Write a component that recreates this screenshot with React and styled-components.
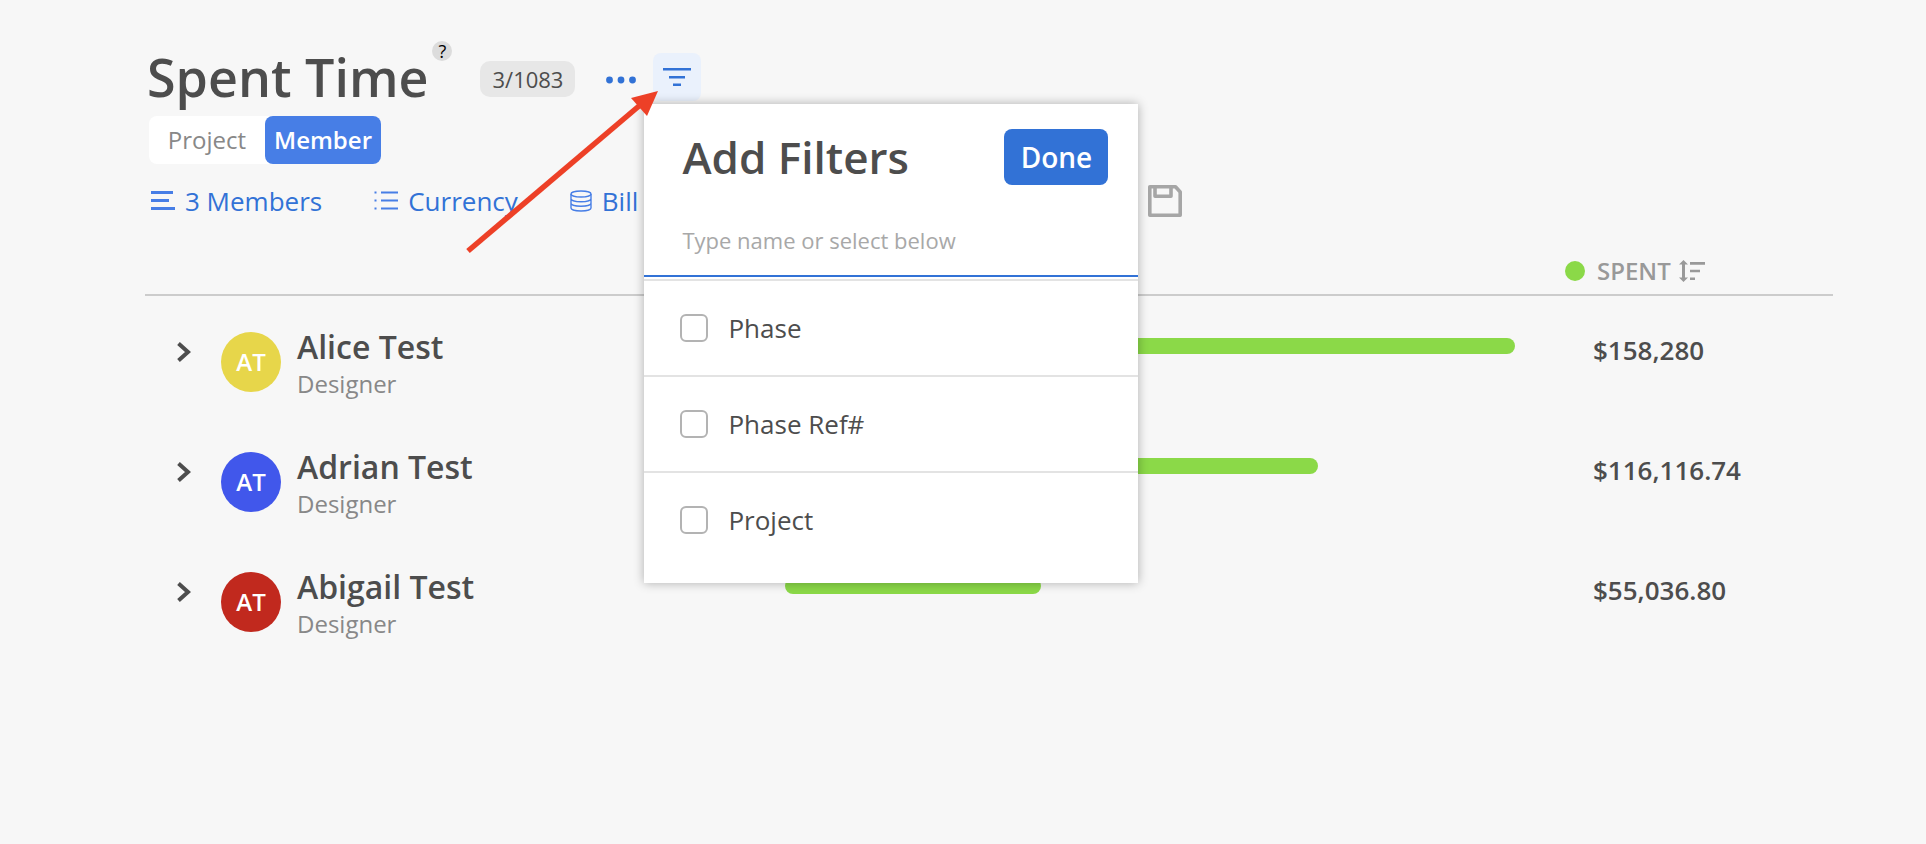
import React, { useState } from "react";
import styled, { createGlobalStyle } from "styled-components";

const GlobalStyle = createGlobalStyle`
  * {
    box-sizing: border-box;
  }

  body {
    margin: 0;
    background-color: #f7f7f7;
    color: #4d4d4d;
    font-family: "Open Sans", "Noto Sans", sans-serif;
  }

  button, input {
    font-family: inherit;
  }
`;

const Page = styled.main`
  position: relative;
  padding: 44px 93px 40px 145px;
`;

const TitleRow = styled.header`
  display: flex;
  align-items: center;
  height: 66px;
  padding-left: 2px;
`;

const Title = styled.h1`
  margin: 0;
  font-size: 52px;
  line-height: 66px;
  font-weight: 600;
`;

const HelpButton = styled.button`
  align-self: flex-start;
  width: 20px;
  height: 20px;
  margin: -3px 28px 0 4px;
  padding: 0;
  border: none;
  border-radius: 50%;
  background-color: #dcdcdc;
  color: #000;
  font-size: 18px;
  line-height: 20px;
  font-weight: 500;
`;

const Count = styled.span`
  margin-top: 4px;
  padding: 0 12px;
  border-radius: 10px;
  background-color: #e7e7e7;
  font-size: 22px;
  line-height: 36px;
`;

const IconButton = styled.button`
  display: flex;
  padding: 0;
  border: none;
  background: none;
  color: ${props => props.color || "#3272d6"};
`;

const MoreButton = styled(IconButton)`
  margin: 6px 16px 0 30px;
`;

const FilterAnchor = styled.div`
  position: relative;
`;

const FilterButton = styled(IconButton)`
  align-items: center;
  justify-content: center;
  width: 48px;
  height: 48px;
  border-radius: 8px;
  background-color: #eaf1fc;
`;

const Switch = styled.div`
  display: flex;
  width: fit-content;
  margin: 6px 0 0 4px;
  border-radius: 8px;
  background-color: #fff;
`;

const SwitchButton = styled.button`
  width: 116px;
  height: 48px;
  padding: 0 0 2px;
  border: none;
  border-radius: 8px;
  background-color: ${props => props.$active ? "#477ee6" : "transparent"};
  color: ${props => props.$active ? "#fff" : "#888"};
  font-size: 24px;
  font-weight: ${props => props.$active ? 600 : 400};
`;

const Toolbar = styled.nav`
  display: flex;
  align-items: center;
  gap: 52px;
  height: 36px;
  margin-top: 19px;
  padding-left: 6px;
`;

const ToolbarButton = styled(IconButton)`
  align-items: center;
  gap: 10px;
  font-size: 26px;
  line-height: 36px;
`;

const SaveButton = styled(IconButton)`
  margin-left: 458px;
`;

const Table = styled.table`
  width: 100%;
  margin-top: 29px;
  table-layout: fixed;
  border-collapse: separate;
  border-spacing: 0;
`;

const HeadCell = styled.th`
  width: ${props => props.width || "auto"};
  height: 48px;
  padding: 0;
  border-bottom: 2px solid #ccc;
`;

const SortButton = styled(IconButton)`
  align-items: center;
  gap: 12px;
  font-size: 24px;
  font-weight: 600;
  line-height: 46px;
`;

const SortLabel = styled.span`
  display: flex;
  align-items: center;
  gap: 8px;
`;

const Dot = styled.span`
  width: 20px;
  height: 20px;
  border-radius: 50%;
  background-color: #8bd948;
`;

const Cell = styled.td`
  height: 120px;
  padding: ${props => props.$top || "30px"} 0 0;
  vertical-align: top;
`;

const Member = styled.div`
  display: flex;
  align-items: flex-start;
  padding-left: 32px;
`;

const ExpandButton = styled(IconButton)`
  margin: 16px 30px 0 0;
`;

const Avatar = styled.span`
  width: 60px;
  height: 60px;
  margin: 6px 16px 0 0;
  border-radius: 50%;
  background-color: ${props => props.color};
  color: #fff;
  font-size: 24px;
  font-weight: 600;
  line-height: 60px;
  text-align: center;
`;

const Name = styled.div`
  font-size: 32px;
  line-height: 42px;
  font-weight: 600;
`;

const Role = styled.div`
  color: #888;
  font-size: 24px;
  line-height: 32px;
`;

const Bar = styled.div`
  height: 16px;
  border-radius: 8px;
  background-color: #8bd948;
`;

const Amount = styled.div`
  padding-left: 28px;
  font-size: 26px;
  line-height: 36px;
  font-weight: 600;
`;

const Popover = styled.section`
  position: absolute;
  top: 51px;
  left: -9px;
  z-index: 10;
  width: 494px;
  padding-bottom: 16px;
  background-color: #fff;
  box-shadow: 0 0 10px rgba(0, 0, 0, .3);
`;

const PopoverHeader = styled.div`
  display: flex;
  align-items: center;
  justify-content: space-between;
  padding: 23px 30px 0 38px;
`;

const PopoverTitle = styled.h2`
  margin: 0;
  font-size: 44px;
  line-height: 60px;
  font-weight: 600;
`;

const DoneButton = styled.button`
  width: 104px;
  height: 56px;
  padding: 0;
  border: none;
  border-radius: 8px;
  background-color: #3272d6;
  color: #fff;
  font-size: 28px;
  font-weight: 600;
`;

const SearchInput = styled.input`
  display: block;
  width: 100%;
  height: 70px;
  margin: 20px 0 2px;
  padding: 0 38px 2px;
  border: none;
  border-bottom: 2px solid #3272d6;
  outline: none;
  background: none;
  color: #4d4d4d;
  font-size: 22px;

  &::placeholder {
    color: #a8a8a8;
    opacity: 1;
  }
`;

const Option = styled.label`
  display: flex;
  align-items: center;
  gap: 20px;
  height: 96px;
  padding-left: 36px;
  border-top: 2px solid #e3e3e3;
  font-size: 26px;
`;

const Checkbox = styled.input`
  appearance: none;
  width: 28px;
  height: 28px;
  margin: 0;
  border: 2px solid #b3b3b3;
  border-radius: 6px;
  background-color: #fff;

  &:checked {
    border-color: #3272d6;
    background-color: #3272d6;
  }
`;

const Arrow = styled.svg`
  position: absolute;
  top: 88px;
  left: 463px;
  z-index: 20;
  pointer-events: none;
`;

const FILTERS = ["Phase", "Phase Ref#", "Project"];

// share is the bar length in percent of the chart column
const MEMBERS = [
    {name: "Alice Test", role: "Designer", color: "#e7d64a", share: 93.6, spent: "$158,280"},
    {name: "Adrian Test", role: "Designer", color: "#4157eb", share: 68.3, spent: "$116,116.74"},
    {name: "Abigail Test", role: "Designer", color: "#c1291e", share: 32.8, spent: "$55,036.80"},
];

const MoreIcon = () => (
    <svg width="32" height="8" viewBox="0 0 32 8" fill="currentColor">
        <circle cx="4.5" cy="4" r="3.4"/>
        <circle cx="16" cy="4" r="3.4"/>
        <circle cx="27.5" cy="4" r="3.4"/>
    </svg>
);

const FilterIcon = () => (
    <svg width="28" height="20" viewBox="0 0 28 20" fill="currentColor">
        <path d="M0 1h28v2.6H0zM6 9h16v2.4H6zM10 16.6h8V19h-8z"/>
    </svg>
);

const LinesIcon = () => (
    <svg width="24" height="20" viewBox="0 0 24 20" fill="#477ee6">
        <path d="M0 0h22v3H0zM0 8h18v3H0zM0 16h24v3H0z"/>
    </svg>
);

const ListIcon = () => (
    <svg width="24" height="20" viewBox="0 0 24 20" fill="#477ee6">
        <path d="M7 .5h17v2H7zM7 8.5h17v2H7zM7 16.5h17v2H7zM.5.5h2v2h-2zM.5 8.5h2v2h-2zM.5 16.5h2v2h-2z"/>
    </svg>
);

const CoinsIcon = () => (
    <svg width="22" height="22" viewBox="0 0 22 22" fill="none" stroke="#477ee6" strokeWidth="1.4">
        <ellipse cx="11" cy="4" rx="10" ry="3"/>
        <path d="M1 4v14c0 1.700 4.500 3 10 3s10-1.300 10-3V4M1 8.700c0 1.700 4.500 3 10 3s10-1.300 10-3M1 13.300c0 1.700 4.500 3 10 3s10-1.300 10-3"/>
    </svg>
);

const SaveIcon = () => (
    <svg width="34" height="32" viewBox="0 0 34 32" fill="none" stroke="currentColor" strokeWidth="3.6" strokeLinejoin="round">
        <path d="M1.800 1.800h25.700l4.700 5.200v23.200H1.800zM7 2v9.200h16V2"/>
    </svg>
);

const SortIcon = () => (
    <svg width="26" height="22" viewBox="0 0 26 22" fill="currentColor">
        <path d="M4.500 0l4.500 4.500H6v13h3l-4.500 4.500-4.500-4.500h3v-13H0zM11 2h15v2.700H11zM11 9.700h10v2.600H11zM11 17.400h5V20h-5z"/>
    </svg>
);

const ChevronIcon = () => (
    <svg width="14" height="20" viewBox="0 0 14 20" fill="none" stroke="#4d4d4d" strokeWidth="4">
        <path d="M1.500 1.500L11 10l-9.500 8.500"/>
    </svg>
);

const FiltersPopover = ({onClose}) => (
    <Popover>
        <PopoverHeader>
            <PopoverTitle>Add Filters</PopoverTitle>
            <DoneButton onClick={onClose}>Done</DoneButton>
        </PopoverHeader>
        <SearchInput aria-label='Filter name' placeholder='Type name or select below'/>
        {FILTERS.map(filter => (
            <Option key={filter}>
                <Checkbox type='checkbox'/>
                {filter}
            </Option>
        ))}
    </Popover>
);

const MemberRow = ({name, role, color, share, spent}) => (
    <tr>
        <Cell>
            <Member>
                <ExpandButton aria-label={`Expand ${name}`}><ChevronIcon/></ExpandButton>
                <Avatar color={color}>AT</Avatar>
                <div>
                    <Name>{name}</Name>
                    <Role>{role}</Role>
                </div>
            </Member>
        </Cell>
        <Cell $top='42px'>
            <Bar style={{width: `${share}%`}}/>
        </Cell>
        <Cell $top='36px'>
            <Amount>{spent}</Amount>
        </Cell>
    </tr>
);

const App = () => {
    const [view, setView] = useState("Member");
    const [showFilters, setShowFilters] = useState(true);

    return (
        <Page>
            <GlobalStyle/>
            <TitleRow>
                <Title>Spent Time</Title>
                <HelpButton>?</HelpButton>
                <Count>3/1083</Count>
                <MoreButton aria-label='More'><MoreIcon/></MoreButton>
                <FilterAnchor>
                    <FilterButton aria-label='Filters' onClick={() => setShowFilters(!showFilters)}>
                        <FilterIcon/>
                    </FilterButton>
                    {showFilters && <FiltersPopover onClose={() => setShowFilters(false)}/>}
                </FilterAnchor>
            </TitleRow>
            <Switch>
                {["Project", "Member"].map(item => (
                    <SwitchButton key={item} $active={item === view} onClick={() => setView(item)}>{item}</SwitchButton>
                ))}
            </Switch>
            <Toolbar>
                <ToolbarButton><LinesIcon/>3 Members</ToolbarButton>
                <ToolbarButton><ListIcon/>Currency</ToolbarButton>
                <ToolbarButton><CoinsIcon/>Bill</ToolbarButton>
                <SaveButton aria-label='Save' color='#a6a6a6'><SaveIcon/></SaveButton>
            </Toolbar>
            <Table>
                <thead>
                    <tr>
                        <HeadCell width='640px' aria-label='Member'/>
                        <HeadCell aria-label='Chart'/>
                        <HeadCell width='268px'>
                            <SortButton color='#999'>
                                <Dot/>
                                <SortLabel>SPENT <SortIcon/></SortLabel>
                            </SortButton>
                        </HeadCell>
                    </tr>
                </thead>
                <tbody>
                    {MEMBERS.map(member => <MemberRow key={member.name} {...member}/>)}
                </tbody>
            </Table>
            <Arrow width='200' height='168' viewBox='0 0 200 168'>
                <path d='M5 163L176 18' stroke='#ed4027' strokeWidth='5.5'/>
                <path d='M195 3l-27 7 16 18z' fill='#ed4027'/>
            </Arrow>
        </Page>
    );
};

export default App;
